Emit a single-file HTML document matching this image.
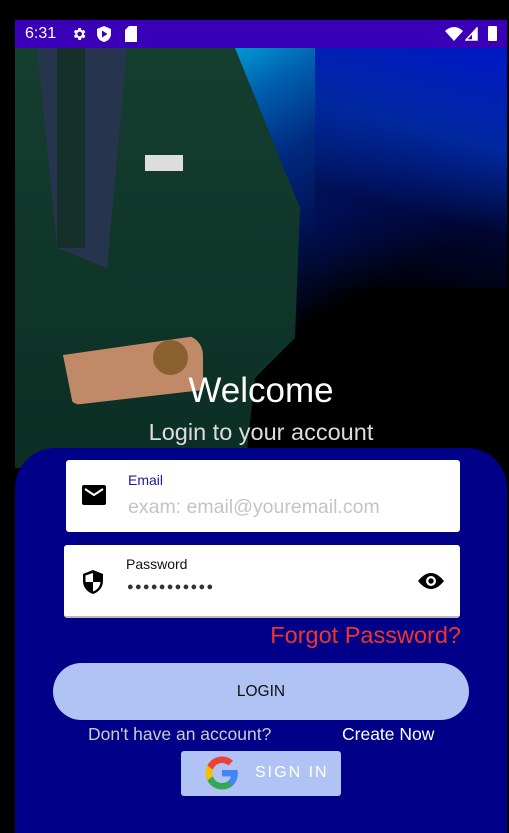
<!DOCTYPE html>
<html><head><style>
*{margin:0;padding:0;box-sizing:border-box}
body{width:509px;height:833px;background:#000;position:relative;overflow:hidden;font-family:"Liberation Sans",sans-serif}
.scr{position:absolute;left:15px;top:20px;width:492px;height:813px;background:#000;overflow:hidden}
.sb{position:absolute;left:0;top:0;width:492px;height:28px;background:#3a00b8;color:#fff;font-size:16px}
.abs{position:absolute}
.panel{position:absolute;left:0;top:428px;width:492px;height:400px;background:#000088;border-radius:40px 40px 0 0}
.field{position:absolute;background:#fff;border-radius:3px}
</style></head><body>
<div class="scr">
 <div class="abs" style="left:170px;top:28px;width:322px;height:280px;background:linear-gradient(150deg,#00b8e0 0%,#0060b0 18%,#002a80 35%,#001050 55%,#000 75%)"></div>
 <div class="abs" style="left:300px;top:28px;width:192px;height:240px;background:linear-gradient(195deg,#0018c8 0%,#0028a0 35%,rgba(0,10,80,.6) 65%,rgba(0,0,0,0) 100%)"></div>
 <div class="abs" style="left:0;top:28px;width:290px;height:420px;background:linear-gradient(180deg,#143e30,#0c2e24);clip-path:polygon(0 0,220px 0,285px 160px,280px 290px,240px 330px,230px 420px,0 420px)"></div>
 <div class="abs" style="left:22px;top:28px;width:90px;height:220px;background:#26344d;clip-path:polygon(0 0,90px 0,70px 220px,20px 200px)"></div>
 <div class="abs" style="left:42px;top:28px;width:28px;height:200px;background:#15302a"></div>
 <div class="abs" style="left:130px;top:135px;width:38px;height:16px;background:#ddd"></div>
 <div class="abs" style="left:48px;top:315px;width:140px;height:70px;background:#c08a68;border-radius:20px;clip-path:polygon(0 20px,140px 0,140px 55px,10px 70px)"></div>
 <div class="abs" style="left:138px;top:320px;width:35px;height:35px;background:#8a6030;border-radius:50%"></div>

 <div class="sb">
  <span class="abs" style="left:10px;top:5px">6:31</span>
  <svg class="abs" style="left:56px;top:6px" width="16" height="16" viewBox="0 0 24 24"><path fill="#fff" d="M19.4 13a7 7 0 000-2l2.1-1.6-2-3.5-2.5 1a7 7 0 00-1.7-1L15 3h-4l-.4 2.7a7 7 0 00-1.7 1l-2.5-1-2 3.5L6.5 11a7 7 0 000 2l-2.1 1.6 2 3.5 2.5-1a7 7 0 001.7 1L11 21h4l.4-2.7a7 7 0 001.7-1l2.5 1 2-3.5zM13 15.5A3.5 3.5 0 1113 8.5a3.5 3.5 0 010 7z"/></svg>
  <svg class="abs" style="left:82px;top:6px" width="14" height="16" viewBox="0 0 14 16"><path fill="#fff" d="M7 0L0 3v5c0 4 3 7 7 8 4-1 7-4 7-8V3z"/><path fill="#3a00b8" d="M5 4.5v7l5.5-3.5z"/></svg>
  <svg class="abs" style="left:110px;top:6px" width="12" height="16" viewBox="0 0 12 16"><path fill="#fff" d="M4 0h8v16H0V4z"/></svg>
  <svg class="abs" style="left:430px;top:7px" width="18" height="14" viewBox="0 0 18 14"><path fill="#fff" d="M0 4q9-8 18 0L9 14z"/></svg>
  <svg class="abs" style="left:450px;top:7px" width="13" height="14" viewBox="0 0 13 14"><path fill="none" stroke="#fff" stroke-width="1.5" d="M12 1v12H1z"/><path fill="#fff" d="M7 7l5-5v11H7z"/></svg>
  <div class="abs" style="left:473px;top:6px;width:9px;height:15px;background:#fff;border-radius:1px"></div>
 </div>

 <div class="abs" style="left:0;width:492px;top:351px;text-align:center;color:#fff;font-size:35px">Welcome</div>
 <div class="abs" style="left:0;width:492px;top:399px;text-align:center;color:#ddd;font-size:23.5px">Login to your account</div>

 <div class="panel"></div>
 <div class="field" style="left:51px;top:440px;width:394px;height:72px">
  <svg class="abs" style="left:16px;top:25px" width="24" height="20" viewBox="0 0 24 20"><rect width="24" height="20" rx="2" fill="#000"/><path d="M3 4l9 6 9-6" stroke="#fff" stroke-width="2" fill="none"/></svg>
  <div class="abs" style="left:62px;top:12px;color:#1a1a9a;font-size:14px">Email</div>
  <div class="abs" style="left:62px;top:36px;color:#c4c4c4;font-size:19.5px">exam: email@youremail.com</div>
 </div>
 <div class="field" style="left:49px;top:525px;width:396px;height:73px;border-bottom:2px solid #bbb">
  <svg class="abs" style="left:18px;top:24px" width="22" height="26" viewBox="0 0 22 26"><path d="M11 1L1 5v7c0 6 4 11 10 13 6-2 10-7 10-13V5z" fill="#000"/><path d="M11 4v9H3.5V6.5zM11 13h7.5c-.5 5-3.5 8-7.5 9.5z" fill="#fff"/></svg>
  <div class="abs" style="left:62px;top:11px;color:#111;font-size:14px">Password</div>
  <div class="abs" style="left:63px;top:36px;color:#333;font-size:11px;letter-spacing:1.3px">●●●●●●●●●●●</div>
  <svg class="abs" style="left:353px;top:27px" width="28" height="18" viewBox="0 0 28 18"><path d="M1 9q13-16 26 0Q14 25 1 9z" fill="#000"/><circle cx="14" cy="9" r="5" fill="#fff"/><circle cx="14" cy="9" r="2.7" fill="#000"/></svg>
 </div>
 <div class="abs" style="right:46px;top:602px;color:#f0352a;font-size:23.5px">Forgot Password?</div>
 <div class="abs" style="left:38px;top:643px;width:416px;height:57px;background:#b1c3f4;border-radius:29px;text-align:center;line-height:57px;font-size:15.5px;color:#111">LOGIN</div>
 <div class="abs" style="left:73px;top:704px;color:#ccc;font-size:17.5px">Don't have an account?</div>
 <div class="abs" style="left:327px;top:704px;color:#fff;font-size:17.5px">Create Now</div>
 <div class="abs" style="left:166px;top:731px;width:160px;height:45px;background:#b1c3f4;border-radius:3px">
  <svg class="abs" style="left:19px;top:4px" width="44" height="36" viewBox="0 0 48 48"><path fill="#4285F4" d="M45 24.5c0-1.6-.1-3.1-.4-4.5H24v8.5h11.8c-.5 2.7-2 5-4.4 6.6v5.5h7.1c4.2-3.8 6.5-9.5 6.5-16.1z"/><path fill="#34A853" d="M24 46c5.9 0 10.9-2 14.5-5.3l-7.1-5.5c-2 1.3-4.5 2.1-7.4 2.1-5.7 0-10.5-3.800-12.2-9H4.5v5.7C8.1 41.1 15.5 46 24 46z"/><path fill="#FBBC05" d="M11.8 28.3c-.4-1.3-.7-2.8-.7-4.3s.3-3 .7-4.3V14H4.5C3 17 2 20.4 2 24s1 7 2.5 10z"/><path fill="#EA4335" d="M24 10.7c3.2 0 6.1 1.1 8.4 3.3l6.3-6.3C34.9 4.2 29.9 2 24 2 15.5 2 8.1 6.9 4.5 14l7.3 5.7c1.700-5.2 6.5-9 12.2-9z"/></svg>
  <div class="abs" style="left:74px;top:13px;color:#fff;font-size:16px;letter-spacing:2px">SIGN IN</div>
 </div>
</div>
</body></html>
